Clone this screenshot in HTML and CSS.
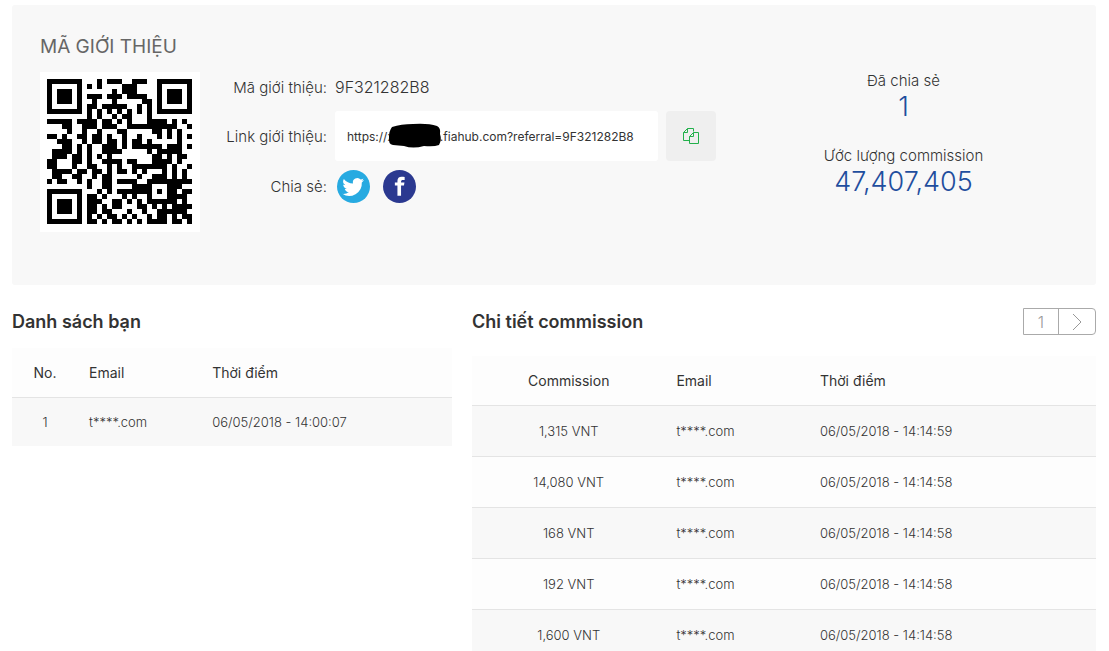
FILE: index.html
```
<!DOCTYPE html>
<html lang="vi">
  <head>
    <meta charset="utf-8">
    <title>Mã giới thiệu</title>
    <link rel="stylesheet" href="styles.css">
  </head>
  <body>
    <section class="referral">
      <div class="referral-main">
        <h1>MÃ GIỚI THIỆU</h1>
        <div class="referral-body">
          <svg id="qrCode" class="qr" viewBox="0 0 32 32" shape-rendering="crispEdges" role="img" aria-label="QR"></svg>
          <div class="fields">
            <span class="label">Mã giới thiệu:</span>
            <span class="code">9F321282B8</span>

            <label class="label" for="refLink">Link giới thiệu:</label>
            <div class="link-row">
              <div class="link-box">
                <input type="text" id="refLink" value="https://xxxxxxxx.fiahub.com?referral=9F321282B8" readonly>
                <svg class="mask" viewBox="0 0 54 26" aria-hidden="true">
                  <path d="M4 4Q13 1 25 1Q40 0 49 3Q53 5 52 11Q54 17 51 22Q46 24 36 23Q25 26 16 23L5 22Q0 21 1 14Q1 8 4 4Z" />
                </svg>
              </div>
              <button type="button" class="copy-btn" aria-label="Copy">
                <svg viewBox="0 0 18 18" width="18" height="18">
                  <path d="M11.500 4.500v-3h-6l-4 4v8h6M5.500 1.500v4h-4M11.500 5.500h5v11h-9v-7l4-4zM11.500 5.500v4h-4" />
                </svg>
              </button>
            </div>

            <span class="label">Chia sẻ:</span>
            <div class="social">
              <a href="#" aria-label="Twitter">
                <svg viewBox="0 0 32 32">
                  <circle cx="16" cy="16" r="16" fill="#27aae1" />
                  <path fill="#fff" transform="translate(5.5 5.5) scale(.88)" d="M23.6 4.9a9.7 9.7 0 0 1-2.8.8 4.9 4.9 0 0 0 2.1-2.7c-.9.6-2 1-3.1 1.2a4.9 4.9 0 0 0-8.4 4.5A13.900 13.900 0 0 1 1.300 3.600a4.900 4.900 0 0 0 1.500 6.600 4.900 4.900 0 0 1-2.200-.6c0 2.300 1.600 4.400 3.900 4.900a5 5 0 0 1-2.200.1 4.900 4.900 0 0 0 4.600 3.400A9.900 9.900 0 0 1-.4 20 13.900 13.900 0 0 0 21.100 7.600a10 10 0 0 0 2.500-2.700z" />
                </svg>
              </a>
              <a href="#" aria-label="Facebook">
                <svg viewBox="0 0 32 32">
                  <circle cx="16" cy="16" r="16" fill="#2b3990" />
                  <path fill="#fff" d="M14 25V15h-2.500v-3H14v-1.500C14 8 15.500 6.500 18 6.500c1 0 2 .1 3 .3v3h-1.500c-1.500 0-2 .6-2 1.700V12h3.300l-.5 3h-2.800v10z" />
                </svg>
              </a>
            </div>
          </div>
        </div>
      </div>
      <div class="stats">
        <div class="stat">
          <span>Đã chia sẻ</span>
          <strong>1</strong>
        </div>
        <div class="stat">
          <span>Ước lượng commission</span>
          <strong>47,407,405</strong>
        </div>
      </div>
    </section>

    <div class="lists">
      <section class="friends">
        <div class="list-head">
          <h2>Danh sách bạn</h2>
        </div>
        <table>
          <thead>
            <tr><th>No.</th><th>Email</th><th>Thời điểm</th></tr>
          </thead>
          <tbody>
            <tr><td>1</td><td>t****.com</td><td>06/05/2018 - 14:00:07</td></tr>
          </tbody>
        </table>
      </section>

      <section class="commissions">
        <div class="list-head">
          <h2>Chi tiết commission</h2>
          <nav class="pager">
            <a href="#">1</a>
            <a href="#" aria-label="Next">
              <svg viewBox="0 0 10 18" width="10" height="18"><path d="M1 1l8 8-8 8" /></svg>
            </a>
          </nav>
        </div>
        <table>
          <thead>
            <tr><th>Commission</th><th>Email</th><th>Thời điểm</th></tr>
          </thead>
          <tbody>
            <tr><td>1,315 VNT</td><td>t****.com</td><td>06/05/2018 - 14:14:59</td></tr>
            <tr><td>14,080 VNT</td><td>t****.com</td><td>06/05/2018 - 14:14:58</td></tr>
            <tr><td>168 VNT</td><td>t****.com</td><td>06/05/2018 - 14:14:58</td></tr>
            <tr><td>192 VNT</td><td>t****.com</td><td>06/05/2018 - 14:14:58</td></tr>
            <tr><td>1,600 VNT</td><td>t****.com</td><td>06/05/2018 - 14:14:58</td></tr>
          </tbody>
        </table>
      </section>
    </div>
    <script src="qr.js"></script>
  </body>
</html>
```
FILE: styles.css
```
* {
  box-sizing: border-box;
}

body {
  margin: 0;
  padding: 5px 13px 0 12px;
  font-family: Inter, "Open Sans", sans-serif;
  font-size: 13px;
  font-weight: 300;
  color: #333;
  background: #fff;
}

h1,
h2 {
  margin: 0;
}

.referral {
  display: flex;
  min-height: 280px;
  padding: 28px;
  background: #f8f8f8;
  border-radius: 3px;
}

.referral-main {
  flex: 68;
}

h1 {
  margin-bottom: 11px;
  font-size: 19px;
  line-height: 28px;
  font-weight: 400;
  color: #666;
}

.referral-body {
  display: flex;
  align-items: flex-start;
  gap: 16px;
}

.qr {
  flex: none;
  width: 160px;
  height: 160px;
  background: #fff;
}

.fields {
  display: grid;
  grid-template-columns: 111px auto;
  grid-template-rows: 30px 50px 33px;
  gap: 9px 8px;
  align-items: center;
}

.label {
  text-align: right;
  font-size: 15px;
  white-space: nowrap;
}

.code {
  font-size: 16px;
}

.link-row {
  display: flex;
  gap: 8px;
}

.link-box {
  position: relative;
}

.link-box input {
  width: 323px;
  height: 50px;
  padding: 0 12px;
  border: none;
  border-radius: 3px;
  background: #fff;
  font: 400 12px Inter, "Open Sans", sans-serif;
  color: #333;
}

.mask {
  position: absolute;
  left: 53px;
  top: 12px;
  width: 54px;
  height: 26px;
}

.copy-btn {
  display: flex;
  align-items: center;
  justify-content: center;
  width: 50px;
  height: 50px;
  padding: 0;
  border: none;
  border-radius: 4px;
  background: #efefef;
  cursor: pointer;
}

.copy-btn path {
  fill: none;
  stroke: #22b04b;
}

.social {
  display: flex;
  gap: 13px;
  padding-left: 2px;
}

.social svg {
  display: block;
  width: 33px;
  height: 33px;
}

.stats {
  flex: 32;
  display: flex;
  flex-direction: column;
  gap: 23px;
  padding-top: 38px;
  text-align: center;
}

.stat span {
  display: block;
  font-size: 15px;
  line-height: 20px;
}

.stat strong {
  display: block;
  font-size: 27px;
  line-height: 32px;
  font-weight: 300;
  color: #1f4e9e;
}

.lists {
  display: grid;
  grid-template-columns: 440fr 624fr;
  gap: 20px;
  padding-top: 22px;
}

.list-head {
  display: flex;
  align-items: center;
  justify-content: space-between;
  height: 29px;
  margin-bottom: 12px;
}

.commissions .list-head {
  margin-bottom: 20px;
}

h2 {
  font-size: 18px;
  font-weight: 600;
}

.pager {
  display: flex;
  border: 1px solid #aaa;
  border-radius: 0 4px 4px 0;
}

.pager a {
  display: flex;
  align-items: center;
  justify-content: center;
  width: 34px;
  height: 25px;
  color: #999;
  font-size: 16px;
  text-decoration: none;
}

.pager a + a {
  width: 37px;
  border-left: 1px solid #aaa;
}

.pager path {
  fill: none;
  stroke: #999;
}

table {
  width: 100%;
  table-layout: fixed;
  border-collapse: collapse;
}

th,
td {
  height: 51px;
  padding: 0 11px;
  text-align: left;
  font-weight: 300;
  border-bottom: 1px solid #e4e4e4;
}

th {
  height: 49px;
  font-size: 14px;
  font-weight: 400;
  background: #fdfdfd;
}

td {
  background: #f8f8f8;
}

tr:nth-child(even) td {
  background: #fdfdfd;
}

th:first-child,
td:first-child {
  width: 31%;
  text-align: center;
}

th:nth-child(2) {
  width: 23%;
}

.friends th:first-child {
  width: 15%;
}

.friends th:nth-child(2) {
  width: 28%;
}

.friends td {
  height: 49px;
  border-bottom: none;
}
```
FILE: qr.js
```
const rows = [
  "#######...#.###..###..#######",
  "#.....#.#.#....###....#.....#",
  "#.###.#......#.###....#.###.#",
  "#.###.#.###.###.####..#.###.#",
  "#.###.#..#...#.....##.#.###.#",
  "#.....#.##.#####..#.#.#.....#",
  "#######.#.#.#.#.#.#.#.#######",
  "........#.#..#.##...#........",
  "#####.####.##.#.#...####.#.#.",
  "...##..###.###..##########..#",
  "....#..#..#...##.....##.#.#..",
  "##.#..##.##.#..#..#...#.#.#.#",
  "..###..#.##.##.#.##.#.....#..",
  "...##.#.#..###.#.######.###.#",
  ".####.#.#..####.....#.#####..",
  ".###.##.#.#.#........##.#.##.",
  "##...##.#..####.##...####.#..",
  "##...#..##..#.#..#######.#..#",
  ".####.##.##.#.##.#.#...#.#.#.",
  ".##..##..#.##.....#..###.#.#.",
  "#.##..#.#..##.####..#########",
  "........#..##....####...###..",
  "#######...#.#.#######.#.##.##",
  "#.....#.##.#...#.#..#...####.",
  "#.###.#.###..##.#.#.######.#.",
  "#.###.#.##.#.##...##.#.#.####",
  "#.###.#.##.##...#..#..######.",
  "#.....#.#.#.##.#.#..#.##.#.##",
  "#######.##.#.##.#.#.####.##.#",
];

const qr = document.getElementById("qrCode");
let d = "";
rows.forEach((row, y) => {
  [...row].forEach((cell, x) => {
    if (cell === "#") {
      d += `M${x} ${y}h1v1h-1z`;
    }
  });
});
// 5px modules with a 7px quiet zone
qr.innerHTML = `<path transform="translate(1.4 1.4)" d="${d}" />`;
```
